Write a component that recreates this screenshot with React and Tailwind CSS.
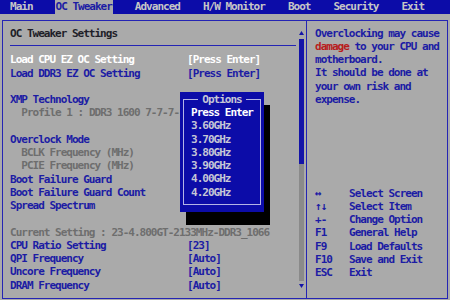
import React from "react";

const BLUE_TEXT = "text-[#1c1ca4]";

function Row({ label, value, tone = "blue", indent = false }) {
  const color =
    tone === "white"
      ? "text-white"
      : tone === "gray"
      ? "text-[#6e6e6e]"
      : "text-[#1c1ca4]";
  return (
    <div className={`flex h-[13.25px] whitespace-pre ${color}`}>
      <div className={`w-[177px] shrink-0 ${indent ? "pl-[11.3px]" : ""}`}>{label}</div>
      {value ? <div>{value}</div> : null}
    </div>
  );
}

function Blank() {
  return <div className="h-[13.25px]" />;
}

export default function App() {
  const tabs = ["Main", "OC Tweaker", "Advanced", "H/W Monitor", "Boot", "Security", "Exit"];
  const keys = [
    ["↔", "Select Screen"],
    ["↑↓", "Select Item"],
    ["+-", "Change Option"],
    ["F1", "General Help"],
    ["F9", "Load Defaults"],
    ["F10", "Save and Exit"],
    ["ESC", "Exit"],
  ];
  const options = ["3.60GHz", "3.70GHz", "3.80GHz", "3.90GHz", "4.00GHz", "4.20GHz"];

  return (
    <div className="w-[450px] h-[300px] bg-[#aaaaaa] relative overflow-hidden font-['DejaVu_Sans_Mono',monospace] text-[11px] leading-[13.25px] tracking-[-0.99px] font-bold">
      {/* Tab bar */}
      <div className="h-[14px] bg-[#0c0ca8] flex items-stretch pl-[10px] gap-[23px] text-[#c6c6c6]">
        {tabs.map((t) =>
          t === "OC Tweaker" ? (
            <span key={t} className="bg-[#aaaaaa] text-[#1c1ca4] flex items-center px-[1px] -mx-[1px] whitespace-pre">
              {t}
            </span>
          ) : (
            <span key={t} className="flex items-center whitespace-pre">
              {t}
            </span>
          )
        )}
      </div>

      {/* Main frame */}
      <div className="ml-[2px] mt-[6px] w-[446px] h-[279px] border border-[#2424b4] flex">
        {/* Left panel */}
        <div className="w-[304px] border-r border-[#2424b4] flex">
          <div className="flex-1 pl-[7px] pt-[5.7px]">
            <div className="text-[#1e1e28] h-[13.25px] whitespace-pre">OC Tweaker Settings</div>
            <div className="h-[1px] bg-[#2424b4] mt-[5px] mr-[3px]" />
            <div className="mt-[7.4px]">
              <Row label="Load CPU EZ OC Setting" value="[Press Enter]" tone="white" />
              <Row label="Load DDR3 EZ OC Setting" value="[Press Enter]" />
              <Blank />
              <Row label="XMP Technology" />
              <Row label="Profile 1 : DDR3 1600 7-7-7-" tone="gray" indent />
              <Blank />
              <Row label="Overclock Mode" />
              <Row label="BCLK Frequency (MHz)" tone="gray" indent />
              <Row label="PCIE Frequency (MHz)" tone="gray" indent />
              <Row label="Boot Failure Guard" />
              <Row label="Boot Failure Guard Count" />
              <Row label="Spread Spectrum" />
              <Blank />
              <div className="h-[13.25px] whitespace-pre text-[#6e6e6e]">
                Current Setting : 23-4.800GT-2133MHz-DDR3_1066
              </div>
              <Row label="CPU Ratio Setting" value="[23]" />
              <Row label="QPI Frequency" value="[Auto]" />
              <Row label="Uncore Frequency" value="[Auto]" />
              <Row label="DRAM Frequency" value="[Auto]" />
            </div>
          </div>
          {/* Scrollbar */}
          <div className="w-[5px] mr-[2px] pt-[10px] pb-[10px] flex flex-col">
            <svg width="5" height="4" viewBox="0 0 5 4" className="block">
              <polygon points="2.5,0 5,4 0,4" fill="#1414a8" />
            </svg>
            <div className="mt-[4px] h-[125px] bg-[#1414a8]" />
            <div className="flex-1 bg-[#8a8a8a]" />
            <svg width="5" height="4" viewBox="0 0 5 4" className="block mt-[3px]">
              <polygon points="0,0 5,0 2.5,4" fill="#1414a8" />
            </svg>
          </div>
        </div>

        {/* Right panel */}
        <div className={`flex-1 pl-[8px] pt-[5.7px] ${BLUE_TEXT}`}>
          <div className="whitespace-pre">
            <div>Overclocking may cause</div>
            <div>
              <span className="text-[#b81c1c]">damage</span> to your CPU and
            </div>
            <div>motherboard.</div>
            <div>It should be done at</div>
            <div>your own risk and</div>
            <div>expense.</div>
          </div>
          <div className="mt-[80.5px]">
            {keys.map(([k, d]) => (
              <div key={k} className="flex whitespace-pre">
                <div className="w-[34px] shrink-0">{k}</div>
                <div>{d}</div>
              </div>
            ))}
          </div>
        </div>
      </div>

      {/* Options popup */}
      <div className="absolute left-[186px] top-[105px] w-[84px] h-[120px] bg-black" />
      <div className="absolute left-[180px] top-[92px] w-[84px] h-[120px] bg-[#0c0ca8] pt-[14px] pl-[11px]">
        <div className="absolute left-[3px] top-[7px] right-[3px] bottom-[7px] border border-[#b4b4e6]" />
        <div className="absolute left-0 right-0 top-[1.4px] flex justify-center">
          <span className="bg-[#0c0ca8] px-[4px] text-[#c6c6d6] whitespace-pre">Options</span>
        </div>
        <div className="relative">
          <div className="text-white whitespace-pre h-[13.3px]">Press Enter</div>
          {options.map((o) => (
            <div key={o} className="text-[#c6c6d6] whitespace-pre h-[13.3px]">
              {o}
            </div>
          ))}
        </div>
      </div>
    </div>
  );
}
